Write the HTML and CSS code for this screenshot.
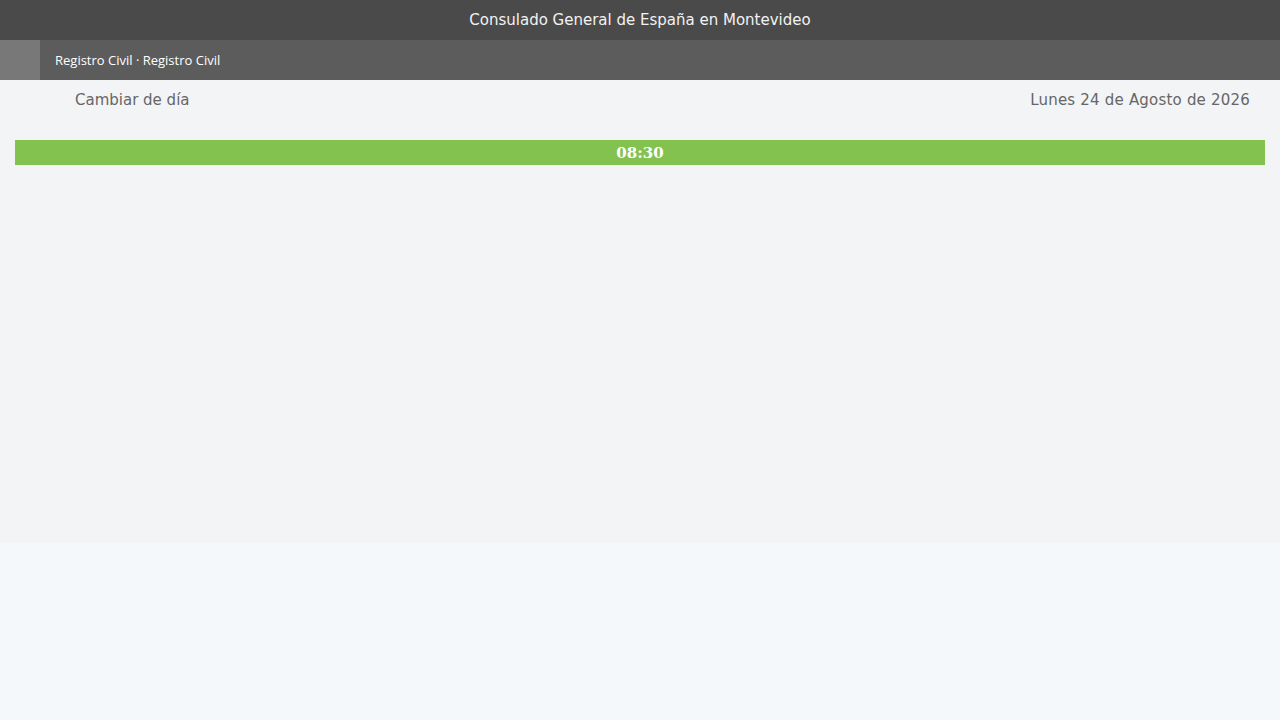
FILE: index.html
```html
<!DOCTYPE html>
<html lang="es">
<head>
<meta charset="utf-8">
<title>Consulado General de España en Montevideo</title>
<link rel="stylesheet" href="styles.css">
</head>
<body>
<header class="topbar">Consulado General de España en Montevideo</header>
<nav class="subbar">
  <div class="subbar-square"></div>
  <div class="crumbs">Registro Civil · Registro Civil</div>
</nav>
<main class="agenda">
  <div class="day-row">
    <a class="change-day">Cambiar de día</a>
    <span class="day-label">Lunes 24 de Agosto de 2026</span>
  </div>
  <div class="slot">08:30</div>
</main>
</body>
</html>
```

FILE: styles.css
```css
html, body {
  margin: 0;
  padding: 0;
  background: #f4f8fb;
}

body {
  font-family: "DejaVu Sans", sans-serif;
}

.topbar {
  height: 40px;
  background: #4a4a4a;
  color: #f2f2f2;
  font-size: 15px;
  display: flex;
  align-items: center;
  justify-content: center;
}

.subbar {
  height: 40px;
  background: #5c5c5c;
  display: flex;
  align-items: center;
}

.subbar-square {
  width: 40px;
  height: 40px;
  background: #787878;
}

.crumbs {
  margin-left: 15px;
  color: #ffffff;
  font-family: "Open Sans", sans-serif;
  font-size: 13px;
}

.agenda {
  height: 463px;
  background: #f3f4f6;
  padding: 0 15px;
  box-sizing: border-box;
}

.day-row {
  height: 40px;
  display: flex;
  align-items: center;
  justify-content: space-between;
  padding: 0 15px 0 60px;
  color: #666666;
  font-size: 15px;
  margin-bottom: 20px;
}

.change-day {
  cursor: pointer;
}

.day-label {
  letter-spacing: 0.2px;
}

.slot {
  height: 25px;
  background: #84c24f;
  color: #ffffff;
  font-family: "DejaVu Serif", serif;
  font-weight: bold;
  font-size: 15px;
  display: flex;
  align-items: center;
  justify-content: center;
}
```
